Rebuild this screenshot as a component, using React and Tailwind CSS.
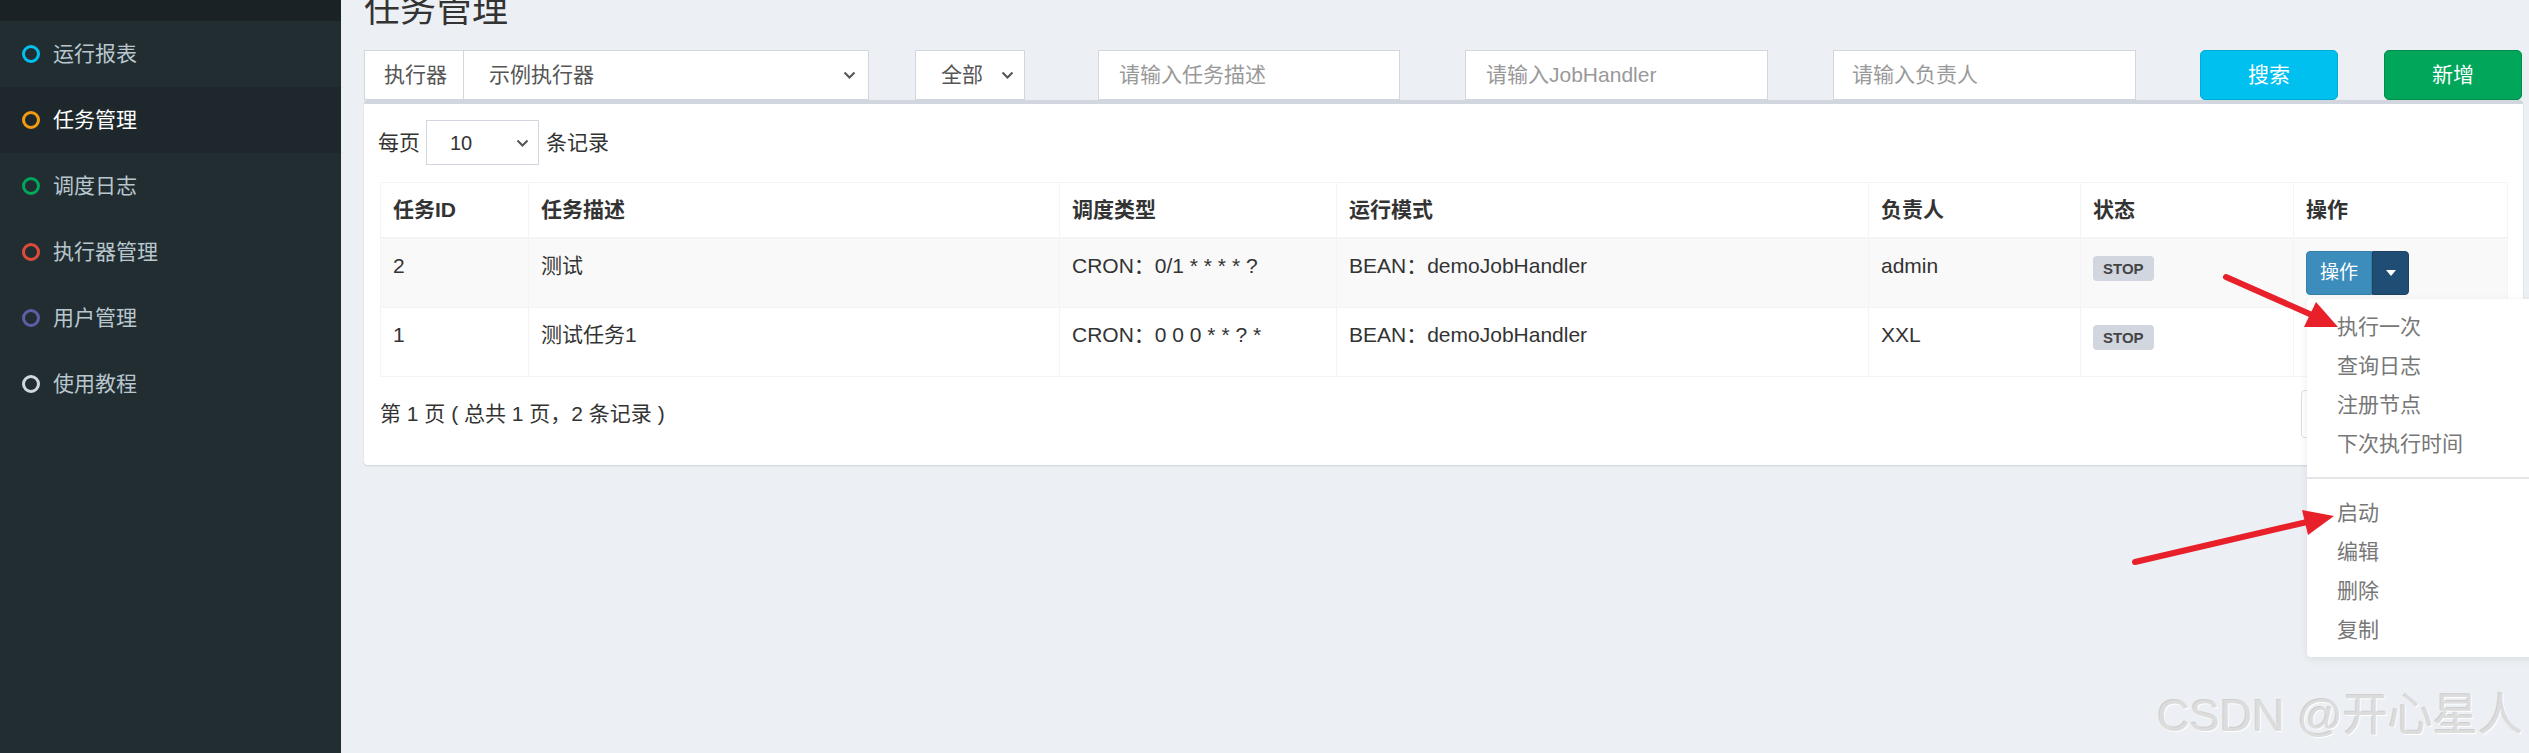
import React from 'react';

const FONT = { fontFamily: '"Liberation Sans", "Noto Sans CJK SC", sans-serif' };

const NAV = [
  { label: '运行报表', ring: 'border-[#00c0ef]' },
  { label: '任务管理', ring: 'border-[#f39c12]', active: true },
  { label: '调度日志', ring: 'border-[#00a65a]' },
  { label: '执行器管理', ring: 'border-[#dd4b39]' },
  { label: '用户管理', ring: 'border-[#605ca8]' },
  { label: '使用教程', ring: 'border-[#d2d6de]' },
];

const COLS = [
  { w: 148, label: '任务ID' },
  { w: 531, label: '任务描述' },
  { w: 277, label: '调度类型' },
  { w: 532, label: '运行模式' },
  { w: 212, label: '负责人' },
  { w: 213, label: '状态' },
  { w: 214, label: '操作' },
];

const ROWS = [
  { id: '2', desc: '测试', type: 'CRON：0/1 * * * * ?', mode: 'BEAN：demoJobHandler', owner: 'admin' },
  { id: '1', desc: '测试任务1', type: 'CRON：0 0 0 * * ? *', mode: 'BEAN：demoJobHandler', owner: 'XXL' },
];

const MENU_TOP = ['执行一次', '查询日志', '注册节点', '下次执行时间'];
const MENU_BOTTOM = ['启动', '编辑', '删除', '复制'];

function Chevron() {
  return (
    <svg width="13" height="8" viewBox="0 0 13 8" className="shrink-0">
      <path d="M1.5 1.5 L6.5 6.5 L11.5 1.5" fill="none" stroke="#555" strokeWidth="2" />
    </svg>
  );
}

function Sidebar() {
  return (
    <div className="w-[341px] shrink-0 bg-[#222d32] h-full">
      <div className="h-[21px] bg-[#1a2226]" />
      {NAV.map((n) => (
        <div
          key={n.label}
          className={`h-[66px] flex items-center pl-[22px] gap-[13px] ${n.active ? 'bg-[#1e282c]' : ''}`}
        >
          <span className={`w-[18px] h-[18px] rounded-full border-[3px] ${n.ring}`} />
          <span className={`text-[21px] ${n.active ? 'text-white' : 'text-[#b8c7ce]'}`}>{n.label}</span>
        </div>
      ))}
    </div>
  );
}

function OpButton({ open, hidden }) {
  return (
    <div className={`relative inline-flex h-[44px] align-top ${hidden ? 'invisible' : ''}`}>
      <span className="w-[66px] flex items-center justify-center bg-[#3c8dbc] border border-[#367fa9] rounded-l-[4px] text-white text-[19px]">
        操作
      </span>
      <span className="w-[37px] flex items-center justify-center bg-[#204d74] border border-[#1b4163] rounded-r-[4px]">
        <svg width="10" height="6" viewBox="0 0 10 6">
          <path d="M0 0 L10 0 L5 6 Z" fill="#fff" />
        </svg>
      </span>
      {open && (
        <div className="absolute left-[1px] top-[48px] w-[240px] bg-white rounded-[4px] shadow-[0_2px_8px_rgba(0,0,0,0.08)] pt-[8px] pb-[8px] z-20 text-left">
          {MENU_TOP.map((m) => (
            <div key={m} className="h-[39px] leading-[39px] pl-[30px] text-[21px] text-[#777]">
              {m}
            </div>
          ))}
          <div className="my-[14px] h-[2px] bg-[#e5e5e5]" />
          {MENU_BOTTOM.map((m) => (
            <div key={m} className="h-[39px] leading-[39px] pl-[30px] text-[21px] text-[#777]">
              {m}
            </div>
          ))}
        </div>
      )}
    </div>
  );
}

function Card() {
  return (
    <div className="w-[2159px] bg-white rounded-[4px] border-t-[4px] border-[#d2d6de] shadow-[0_1px_2px_rgba(0,0,0,0.12)] px-[16px] pt-[16px] pb-[27px]">
      {/* page size */}
      <div className="flex items-center h-[45px] text-[21px] text-[#333]">
        <span className="-ml-[2px]">每页</span>
        <div className="ml-[6px] w-[113px] h-[45px] border border-[#d2d6de] flex items-center justify-between pl-[23px] pr-[9px]">
          <span className="text-[20px]">10</span>
          <Chevron />
        </div>
        <span className="ml-[7px]">条记录</span>
      </div>

      {/* table */}
      <table className="mt-[17px] table-fixed border-collapse text-[21px] text-[#333]" style={{ width: 2127 }}>
        <colgroup>
          {COLS.map((c) => (
            <col key={c.label} style={{ width: c.w }} />
          ))}
        </colgroup>
        <thead>
          <tr>
            {COLS.map((c) => (
              <th
                key={c.label}
                className="text-left font-bold px-[12px] py-[12px] leading-[30px] border border-[#f4f4f4] border-b-[2px]"
              >
                {c.label}
              </th>
            ))}
          </tr>
        </thead>
        <tbody>
          {ROWS.map((r, i) => (
            <tr key={r.id} className={i === 0 ? 'bg-[#f9f9f9]' : 'bg-white'}>
              <td className="px-[12px] py-[12px] leading-[30px] align-top border border-[#f4f4f4]">{r.id}</td>
              <td className="px-[12px] py-[12px] leading-[30px] align-top border border-[#f4f4f4]">{r.desc}</td>
              <td className="px-[12px] py-[12px] leading-[30px] align-top border border-[#f4f4f4] whitespace-pre">{r.type}</td>
              <td className="px-[12px] py-[12px] leading-[30px] align-top border border-[#f4f4f4]">{r.mode}</td>
              <td className="px-[12px] py-[12px] leading-[30px] align-top border border-[#f4f4f4]">{r.owner}</td>
              <td className="px-[12px] py-[12px] leading-[30px] align-top border border-[#f4f4f4]">
                <span className="inline-block mt-[5px] h-[25px] leading-[25px] px-[10px] rounded-[4px] bg-[#d2d6de] text-[#444] text-[15px] font-bold align-top">
                  STOP
                </span>
              </td>
              <td className="px-[12px] py-[12px] leading-[30px] align-top border border-[#f4f4f4]">
                <OpButton open={i === 0} hidden={i !== 0} />
              </td>
            </tr>
          ))}
        </tbody>
      </table>

      {/* footer: info + pagination (mostly under the open menu) */}
      <div className="mt-[13px] h-[48px] flex items-center justify-between text-[21px] text-[#333]">
        <span>第 1 页 ( 总共 1 页，2 条记录 )</span>
        <div className="w-[206px] h-[48px] border border-[#ddd] rounded-[4px]" />
      </div>
    </div>
  );
}

function Filters() {
  const input = 'h-[50px] bg-white border border-[#d2d6de] flex items-center text-[21px]';
  return (
    <div className="flex h-[50px] mt-[22px]">
      <div className="w-[505px] flex">
        <div className={`${input} w-[100px] pl-[19px] text-[#555]`}>执行器</div>
        <div className={`${input} flex-1 border-l-0 pl-[25px] pr-[12px] justify-between text-[#555]`}>
          <span>示例执行器</span>
          <Chevron />
        </div>
      </div>
      <div className={`${input} ml-[46px] w-[110px] pl-[25px] pr-[10px] justify-between text-[#555]`}>
        <span>全部</span>
        <Chevron />
      </div>
      <div className={`${input} ml-[73px] w-[302px] pl-[20px] text-[#999]`}>请输入任务描述</div>
      <div className={`${input} ml-[65px] w-[303px] pl-[20px] text-[#999]`}>请输入JobHandler</div>
      <div className={`${input} ml-[65px] w-[303px] pl-[18px] text-[#999]`}>请输入负责人</div>
      <div className="ml-[64px] w-[138px] h-[50px] rounded-[5px] bg-[#00c0ef] border border-[#00acd6] flex items-center justify-center text-white text-[21px]">
        搜索
      </div>
      <div className="ml-[46px] w-[138px] h-[50px] rounded-[5px] bg-[#00a65a] border border-[#008d4c] flex items-center justify-center text-white text-[21px]">
        新增
      </div>
    </div>
  );
}

function Arrows() {
  return (
    <svg className="absolute inset-0 pointer-events-none z-30" width="2529" height="753">
      <line x1="2226" y1="277" x2="2312" y2="315" stroke="#e8202a" strokeWidth="6" strokeLinecap="round" />
      <polygon points="2338,327 2304,327 2316,302" fill="#e8202a" />
      <line x1="2135" y1="562" x2="2307" y2="522" stroke="#e8202a" strokeWidth="6" strokeLinecap="round" />
      <polygon points="2334,516 2302,510 2308,535" fill="#e8202a" />
    </svg>
  );
}

export default function App() {
  return (
    <div className="relative w-[2529px] h-[753px] overflow-hidden flex" style={FONT}>
      <Sidebar />
      <div className="flex-1 bg-[#ecf0f5] pl-[23px] h-full">
        <h1 className="-mt-[8px] text-[36px] leading-[36px] text-[#333] font-normal">任务管理</h1>
        <Filters />
        <Card />
      </div>
      <Arrows />
      <div
        className="absolute right-[6px] top-[682px] text-[45px] text-[#dcdcdc] z-30 whitespace-nowrap"
        style={{ textShadow: '1px 1px 0 #fff, -1px -1px 0 #cfcfcf' }}
      >
        CSDN @开心星人
      </div>
    </div>
  );
}
